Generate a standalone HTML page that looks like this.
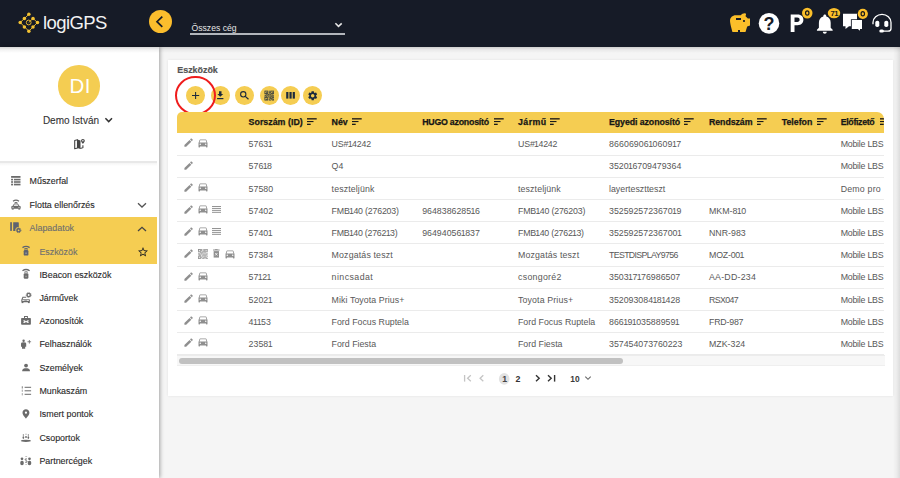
<!DOCTYPE html><html><head><meta charset="utf-8"><style>
html,body{margin:0;padding:0;width:900px;height:478px;overflow:hidden;background:#f5f5f5;font-family:"Liberation Sans",sans-serif;}
body{position:relative}
div,svg{box-sizing:border-box;}
</style></head><body>
<div style="position:absolute;left:886px;top:46px;width:14px;height:432px;background:linear-gradient(90deg,rgba(0,0,0,0) 0%,rgba(0,0,0,0) 50%,rgba(0,0,0,0.035) 75%,rgba(0,0,0,0.1) 100%)"></div>
<div style="position:absolute;left:0;top:0;width:900px;height:46.7px;background:#161b27;"></div>
<svg style="position:absolute;left:0px;top:0px;width:50px;height:46px;overflow:visible" viewBox="0 0 50 46"><path d="M28.85 14.3 L20.2 22.5 L28.85 31.2 L37.5 22.5 L33 18.4 L28.7 22.5" stroke="#f3c232" stroke-width="0.9" fill="none"/><circle cx="28.7" cy="22.5" r="2.4" stroke="#f3c232" stroke-width="0.9" fill="none"/><circle cx="28.85" cy="14.3" r="1.75" fill="#f3c232"/><circle cx="24.4" cy="18.4" r="1.75" fill="#f3c232"/><circle cx="33" cy="18.4" r="1.75" fill="#f3c232"/><circle cx="20.2" cy="22.5" r="1.75" fill="#f3c232"/><circle cx="37.5" cy="22.5" r="1.75" fill="#f3c232"/><circle cx="24.4" cy="27" r="1.75" fill="#f3c232"/><circle cx="33" cy="27" r="1.75" fill="#f3c232"/><circle cx="28.85" cy="31.2" r="1.75" fill="#f3c232"/></svg>
<div style="position:absolute;left:43px;top:14.14px;font-size:18.5px;line-height:18.5px;color:#f2f2f2;font-weight:400;letter-spacing:-0.6px;white-space:nowrap;">logiGPS</div>
<div style="position:absolute;left:148.5px;top:10.2px;width:23px;height:23px;border-radius:50%;background:#fbbd2d"></div>
<svg style="position:absolute;left:0px;top:0px;width:180px;height:46px;overflow:visible" viewBox="0 0 180 46"><path d="M162.3 16.7 L157 21.7 L162.3 26.8" stroke="#161b27" stroke-width="1.7" fill="none"/></svg>
<div style="position:absolute;left:191.5px;top:24.38px;font-size:8.65px;line-height:8.65px;color:#e6e6e6;font-weight:400;letter-spacing:0px;white-space:nowrap;">Összes cég</div>
<div style="position:absolute;left:190px;top:33.1px;width:155px;height:1.7px;background:#b2b6bc"></div>
<svg style="position:absolute;left:0px;top:0px;width:350px;height:46px;overflow:visible" viewBox="0 0 350 46"><path d="M335.4 23.3 L338.5 26.3 L341.7 23.3" stroke="#e6e6e6" stroke-width="1.6" fill="none"/></svg>
<svg style="position:absolute;left:728.3px;top:11.3px;width:24px;height:24px" viewBox="0 0 24 24" ><path fill="#fbbf2a" d="M19.83 7.5l-2.27-2.27c.07-.42.18-.81.32-1.15.08-.18.12-.37.12-.58 0-.69-.56-1.25-1.25-1.25-1.64 0-3.09.79-4 2h-5C4.46 4.25 2 6.71 2 9.75S4.5 21 4.5 21H10v-2h2v2h5.5l1.68-5.59 2.82-.94V7.5h-2.17zM13 9H8V7h5v2zm3 2c-.55 0-1-.45-1-1s.45-1 1-1 1 .45 1 1-.45 1-1 1z"/></svg>
<svg style="position:absolute;left:0px;top:0px;width:900px;height:46px;overflow:visible" viewBox="0 0 900 46"><circle cx="769" cy="23.4" r="10.3" fill="#fff"/></svg>
<div style="position:absolute;left:763.6px;top:15.26px;font-size:18px;line-height:18px;color:#161b27;font-weight:700;letter-spacing:0px;white-space:nowrap;">?</div>
<svg style="position:absolute;left:0px;top:0px;width:900px;height:46px;overflow:visible" viewBox="0 0 900 46"><path d="M790.7 31.9 V14.4 H797.5 C801.5 14.4 803.4 16.8 803.4 19.8 C803.4 22.8 801.5 25.2 797.5 25.2 H794.5 V31.9 Z M794.5 17.6 V22.0 H797.2 C798.8 22.0 799.6 21.1 799.6 19.8 C799.6 18.5 798.8 17.6 797.2 17.6 Z" fill="#fff" fill-rule="evenodd"/></svg>
<svg style="position:absolute;left:812.8px;top:11.6px;width:23.6px;height:23.6px" viewBox="0 0 24 24" ><path fill="#fff" d="M12 22c1.1 0 2-.9 2-2h-4c0 1.1.89 2 2 2zm6-6v-5c0-3.07-1.64-5.64-4.5-6.32V4c0-.83-.67-1.5-1.5-1.5s-1.5.67-1.5 1.5v.68C7.630 5.36 6 7.92 6 11v5l-2 2v1h16v-1l-2-2z"/></svg>
<svg style="position:absolute;left:0px;top:0px;width:900px;height:46px;overflow:visible" viewBox="0 0 900 46"><path d="M843 13.7 H857 V26.3 H849 L845.5 28.9 V26.3 H843 Z" fill="#fff"/>
<path d="M850.9 19.2 H862.8 V29.8 H860.6 V31.5 L858.2 29.8 H850.9 Z" fill="#161b27"/>
<path d="M851.8 20.1 H862 V29 H860 V30.8 L857.8 29 H851.8 Z" fill="#fff"/></svg>
<svg style="position:absolute;left:0px;top:0px;width:900px;height:46px;overflow:visible" viewBox="0 0 900 46"><path d="M873 24.3 V22.5 A9 8.2 0 0 1 891 22.5 V28.5 C891 30.5 890 31.2 888 31.2 H881.5" stroke="#fff" stroke-width="1.3" fill="none"/>
<rect x="875.3" y="20.7" width="4" height="6.4" rx="1.8" fill="#fff"/>
<rect x="884.3" y="20.7" width="4" height="6.4" rx="1.8" fill="#fff"/>
<rect x="879.3" y="29.6" width="4.6" height="3" rx="1.5" fill="#fff"/></svg>
<svg style="position:absolute;left:0px;top:0px;width:900px;height:46px;overflow:visible" viewBox="0 0 900 46"><ellipse cx="807.25" cy="13.1" rx="5.25" ry="5.35" fill="#fbbf2a"/><ellipse cx="807.25" cy="13.0" rx="1.7" ry="2.15" stroke="#1a1a1a" stroke-width="1.2" fill="none"/>
<ellipse cx="834" cy="13.1" rx="6.25" ry="5.15" fill="#fbbf2a"/>
<ellipse cx="862.8" cy="13.8" rx="5.1" ry="5.1" fill="#fbbf2a"/><ellipse cx="862.8" cy="13.7" rx="1.7" ry="2.15" stroke="#1a1a1a" stroke-width="1.2" fill="none"/></svg>
<div style="position:absolute;left:830.4px;top:9.87px;font-size:7.6px;line-height:7.6px;color:#1a1a1a;font-weight:700;letter-spacing:-0.3px;white-space:nowrap;">71</div>
<div style="position:absolute;left:0;top:47px;width:158.5px;height:431px;background:#fff;box-shadow:1px 0 4px rgba(0,0,0,0.35)"></div>
<div style="position:absolute;left:0;top:161px;width:157px;height:2.3px;background:#e8e8e8"></div>
<div style="position:absolute;left:0;top:163.3px;width:157px;height:2.5px;background:linear-gradient(#f4f4f4,#fff)"></div>
<div style="position:absolute;left:58.4px;top:65.3px;width:41.6px;height:41.6px;border-radius:50%;background:#f4cd52"></div>
<div style="position:absolute;left:69.6px;top:76.05px;font-size:20.5px;line-height:20.5px;color:#ffffff;font-weight:400;letter-spacing:0.3px;white-space:nowrap;">DI</div>
<div style="position:absolute;left:42.9px;top:115.83px;font-size:10.0px;line-height:10.0px;color:#333;font-weight:400;letter-spacing:0px;white-space:nowrap;-webkit-text-stroke:0.1px #333">Demo István</div>
<svg style="position:absolute;left:0px;top:0px;width:160px;height:160px;overflow:visible" viewBox="0 0 160 160"><path d="M105.4 118.3 L108.7 121.6 L112 118.3" stroke="#333" stroke-width="1.5" fill="none"/></svg>
<svg style="position:absolute;left:0px;top:0px;width:160px;height:160px;overflow:visible" viewBox="0 0 160 160"><path d="M74.7 140.6 L77.5 139.7 V147.9 L74.7 148.8 Z" stroke="#444" stroke-width="1.1" fill="none" stroke-linejoin="round"/><path d="M77.2 139.5 L80.5 140.6 V148.9 L77.2 147.9 Z" fill="#444"/><path d="M80.3 148.6 L82.9 147.7 V145.3" stroke="#444" stroke-width="1.1" fill="none"/><path d="M82.9 143.9 C82.9 143.9 81 142.2 81 140.8 A1.9 1.9 0 0 1 84.8 140.8 C84.8 142.2 82.9 143.9 82.9 143.9 Z" fill="#444"/><circle cx="82.9" cy="140.8" r="0.75" fill="#fff"/></svg>
<div style="position:absolute;left:0;top:216.9px;width:157.3px;height:46.8px;background:#f5cd52"></div>
<div style="position:absolute;left:29.6px;top:176.97px;font-size:8.9px;line-height:8.9px;color:#2a2a2a;font-weight:400;letter-spacing:0px;white-space:nowrap;-webkit-text-stroke:0.12px #2a2a2a">Műszerfal</div>
<div style="position:absolute;left:29.6px;top:201.07px;font-size:8.9px;line-height:8.9px;color:#2a2a2a;font-weight:400;letter-spacing:0px;white-space:nowrap;-webkit-text-stroke:0.12px #2a2a2a">Flotta ellenőrzés</div>
<div style="position:absolute;left:29.6px;top:224.47px;font-size:8.9px;line-height:8.9px;color:#6f6f6f;font-weight:400;letter-spacing:0px;white-space:nowrap;-webkit-text-stroke:0.12px #6f6f6f">Alapadatok</div>
<div style="position:absolute;left:39.4px;top:247.57px;font-size:8.9px;line-height:8.9px;color:#6f6f6f;font-weight:400;letter-spacing:0px;white-space:nowrap;-webkit-text-stroke:0.12px #6f6f6f">Eszközök</div>
<div style="position:absolute;left:39.4px;top:270.57px;font-size:8.9px;line-height:8.9px;color:#2a2a2a;font-weight:400;letter-spacing:0px;white-space:nowrap;-webkit-text-stroke:0.12px #2a2a2a">IBeacon eszközök</div>
<div style="position:absolute;left:39.4px;top:293.77px;font-size:8.9px;line-height:8.9px;color:#2a2a2a;font-weight:400;letter-spacing:0px;white-space:nowrap;-webkit-text-stroke:0.12px #2a2a2a">Járművek</div>
<div style="position:absolute;left:39.4px;top:317.07px;font-size:8.9px;line-height:8.9px;color:#2a2a2a;font-weight:400;letter-spacing:0px;white-space:nowrap;-webkit-text-stroke:0.12px #2a2a2a">Azonosítók</div>
<div style="position:absolute;left:39.4px;top:340.47px;font-size:8.9px;line-height:8.9px;color:#2a2a2a;font-weight:400;letter-spacing:0px;white-space:nowrap;-webkit-text-stroke:0.12px #2a2a2a">Felhasználók</div>
<div style="position:absolute;left:39.4px;top:363.57px;font-size:8.9px;line-height:8.9px;color:#2a2a2a;font-weight:400;letter-spacing:0px;white-space:nowrap;-webkit-text-stroke:0.12px #2a2a2a">Személyek</div>
<div style="position:absolute;left:39.4px;top:386.97px;font-size:8.9px;line-height:8.9px;color:#2a2a2a;font-weight:400;letter-spacing:0px;white-space:nowrap;-webkit-text-stroke:0.12px #2a2a2a">Munkaszám</div>
<div style="position:absolute;left:39.4px;top:409.87px;font-size:8.9px;line-height:8.9px;color:#2a2a2a;font-weight:400;letter-spacing:0px;white-space:nowrap;-webkit-text-stroke:0.12px #2a2a2a">Ismert pontok</div>
<div style="position:absolute;left:39.4px;top:433.57px;font-size:8.9px;line-height:8.9px;color:#2a2a2a;font-weight:400;letter-spacing:0px;white-space:nowrap;-webkit-text-stroke:0.12px #2a2a2a">Csoportok</div>
<div style="position:absolute;left:39.4px;top:456.57px;font-size:8.9px;line-height:8.9px;color:#2a2a2a;font-weight:400;letter-spacing:0px;white-space:nowrap;-webkit-text-stroke:0.12px #2a2a2a">Partnercégek</div>
<svg style="position:absolute;left:0px;top:0px;width:160px;height:478px;overflow:visible" viewBox="0 0 160 478"><g fill="#6b6b6b"><rect x="11.1" y="176" width="9.4" height="1.8"/><rect x="11.1" y="178.8" width="2" height="1.6"/><rect x="14" y="178.8" width="6.5" height="1.6"/><rect x="11.1" y="181.2" width="2" height="1.6"/><rect x="14" y="181.2" width="6.5" height="1.6"/><rect x="11.1" y="183.7" width="2" height="1.7"/><rect x="14" y="183.7" width="6.5" height="1.7"/></g><g stroke="#6b6b6b" fill="none"><path d="M13 201.3 Q16 199.1 19 201.3" stroke-width="1.2"/><path d="M14.5 202.8 Q16 201.9 17.5 202.8" stroke-width="0.9"/><path d="M14.4 203.9 H17.6 L19.2 206.3 H12.8 Z" stroke-width="1"/></g><g fill="#6b6b6b"><rect x="11.3" y="205.9" width="9.4" height="2.9" rx="0.9"/><rect x="11.8" y="208.4" width="1.9" height="1.2"/><rect x="18.3" y="208.4" width="1.9" height="1.2"/></g><g fill="#fff" opacity="0.75"><circle cx="13" cy="207.3" r="0.65"/><circle cx="19" cy="207.3" r="0.65"/></g><g fill="#5e6370"><rect x="10.2" y="222.2" width="1.7" height="8.7"/><path d="M13.2 222.2 H18.3 L18.8 222.7 V226.9 A3.7 3.7 0 0 0 15.3 230.9 H13.2 Z"/></g><circle cx="18.6" cy="230.3" r="1.55" stroke="#5e6370" stroke-width="1.3" fill="none"/><circle cx="18.6" cy="230.3" r="2.35" stroke="#5e6370" stroke-width="0.8" fill="none" stroke-dasharray="1.1 0.75"/><g stroke="#5e6370" fill="none"><path d="M22.5 247.60000000000002 Q26.05 245.10000000000002 29.6 247.60000000000002" stroke-width="1.35"/><path d="M24.3 249.20000000000002 Q26.05 248.0 27.8 249.20000000000002" stroke-width="1.1"/></g><rect x="23.7" y="250.10000000000002" width="4.7" height="5.5" rx="1.2" fill="#5e6370"/><rect x="25.2" y="252.5" width="1.7" height="1.4" fill="#fff" opacity="0.3"/><g stroke="#6b6b6b" fill="none"><path d="M22.5 270.8 Q26.05 268.3 29.6 270.8" stroke-width="1.35"/><path d="M24.3 272.4 Q26.05 271.2 27.8 272.4" stroke-width="1.1"/></g><rect x="23.7" y="273.3" width="4.7" height="5.5" rx="1.2" fill="#6b6b6b"/><rect x="25.2" y="275.7" width="1.7" height="1.4" fill="#fff" opacity="0.3"/><circle cx="28.7" cy="295" r="1.65" stroke="#6b6b6b" stroke-width="1.4" fill="none"/><circle cx="28.7" cy="295" r="2.5" stroke="#6b6b6b" stroke-width="0.7" fill="none" stroke-dasharray="1 0.65"/><path d="M21.9 299.6 L22.9 297.3 H26.2" stroke="#6b6b6b" stroke-width="1.1" fill="none"/><g fill="#6b6b6b"><rect x="21.3" y="299.3" width="8.6" height="3.0" rx="0.7"/><rect x="21.6" y="302" width="1.8" height="1.1"/><rect x="27.9" y="302" width="1.8" height="1.1"/></g><rect x="22.3" y="299.9" width="6.6" height="1.1" fill="#fff" opacity="0.8"/><rect x="24.3" y="300.5" width="2.6" height="1.0" fill="#6b6b6b"/><rect x="24.5" y="316.5" width="2.9" height="2.0" stroke="#6b6b6b" stroke-width="1" fill="none"/><rect x="21.1" y="318" width="9.8" height="6.7" rx="0.8" fill="#6b6b6b"/><path d="M23.2 320.2 H24.6 L25.6 321.1 H26.5 L27.5 320.2 H28.9 L28.2 321.6 L28.9 323 H27.5 L26.5 322.2 H25.6 L24.6 323 H23.2 L23.9 321.6 Z" fill="#fff" opacity="0.9"/><g fill="#6b6b6b"><circle cx="23.6" cy="340.8" r="1.2"/><path d="M21 343.6 Q21 342.3 23.6 342.3 Q26.2 342.3 26.2 343.6 V346.8 H25.2 V348.8 H22 V346.8 H21 Z"/><rect x="27.5" y="341.4" width="3.6" height="0.8"/><rect x="28.9" y="340" width="0.8" height="3.6"/></g><g fill="#6b6b6b"><circle cx="26.05" cy="365.6" r="1.9"/><path d="M22.2 371.3 V370.4 C22.2 368.8 24.2 368.2 26.05 368.2 C27.9 368.2 29.9 368.8 29.9 370.4 V371.3 Z"/></g><g fill="#6b6b6b"><rect x="24.6" y="386.8" width="6.5" height="1"/><rect x="24.6" y="390.3" width="6.5" height="1"/><rect x="24.6" y="393.8" width="6.5" height="1"/><rect x="21.8" y="386.3" width="0.9" height="2.2"/><rect x="21.8" y="389.6" width="0.9" height="2.2" opacity="0.7"/><rect x="21.8" y="393.1" width="0.9" height="2.3" opacity="0.7"/></g><path d="M25.95 409.3 C24 409.3 22.5 410.8 22.5 412.7 C22.5 415.2 25.95 418.5 25.95 418.5 C25.95 418.5 29.4 415.2 29.4 412.7 C29.4 410.8 27.9 409.3 25.95 409.3 Z M25.95 411.6 A1.1 1.1 0 1 0 25.95 413.8 A1.1 1.1 0 1 0 25.95 411.6 Z" fill="#6b6b6b" fill-rule="evenodd"/><g fill="#6b6b6b"><ellipse cx="25.9" cy="440.85" rx="5.1" ry="1.15"/><circle cx="23.35" cy="435" r="0.65"/><ellipse cx="23.35" cy="437.6" rx="0.8" ry="1.3"/><circle cx="28.35" cy="435" r="0.65"/><ellipse cx="28.35" cy="437.6" rx="0.8" ry="1.3"/><circle cx="26" cy="434.2" r="0.8" opacity="0.45"/><ellipse cx="26" cy="437" rx="1.1" ry="1" opacity="0.85"/></g><g fill="#6b6b6b"><circle cx="22" cy="458.8" r="1.35"/><ellipse cx="22" cy="463" rx="1.8" ry="2.3"/><circle cx="29.5" cy="458.8" r="1.35"/><ellipse cx="29.5" cy="463" rx="1.8" ry="2.3"/></g><path d="M27 459.2 Q26.1 458.4 25.2 459.1 Q24.6 460 26.1 460.5 Q27.6 461 27 462 Q26.1 462.8 25.1 462.1" stroke="#6b6b6b" stroke-width="0.9" fill="none"/><g fill="#6b6b6b" opacity="0.6"><rect x="25.3" y="456.1" width="1.8" height="0.7"/><rect x="25.3" y="464.2" width="1.8" height="0.6"/></g></svg>
<svg style="position:absolute;left:0px;top:0px;width:160px;height:478px;overflow:visible" viewBox="0 0 160 478"><path d="M138 203.3 L142 207 L146 203.3" stroke="#555" stroke-width="1.3" fill="none"/>
<path d="M138 231 L142 227.3 L146 231" stroke="#444" stroke-width="1.3" fill="none"/></svg>
<svg style="position:absolute;left:137.2px;top:246.2px;width:12px;height:12px" viewBox="0 0 24 24" ><path fill="#222" d="M22 9.24l-7.19-.62L12 2 9.19 8.63 2 9.24l5.46 4.73L5.82 21 12 17.27 18.18 21l-1.63-7.03L22 9.24zM12 15.4l-3.76 2.27 1-4.28-3.32-2.88 4.38-.38L12 6.1l1.710 4.04 4.38.38-3.32 2.88 1 4.28L12 15.4z"/></svg>
<div style="position:absolute;left:167.7px;top:59.9px;width:725.5px;height:336.3px;background:#fff;box-shadow:0 0 2.5px rgba(0,0,0,0.08)"></div>
<div style="position:absolute;left:177.3px;top:65.77px;font-size:8.9px;line-height:8.9px;color:#555;font-weight:700;letter-spacing:0px;white-space:nowrap;-webkit-text-stroke:0.2px #555">Eszközök</div>
<div style="position:absolute;left:186.0px;top:86.15px;width:19px;height:19.2px;border-radius:50%;background:#f5cd52"></div>
<div style="position:absolute;left:210.6px;top:86.15px;width:19px;height:19.2px;border-radius:50%;background:#f5cd52"></div>
<div style="position:absolute;left:235.1px;top:86.15px;width:19px;height:19.2px;border-radius:50%;background:#f5cd52"></div>
<div style="position:absolute;left:259.8px;top:86.15px;width:19px;height:19.2px;border-radius:50%;background:#f5cd52"></div>
<div style="position:absolute;left:281.0px;top:86.15px;width:19px;height:19.2px;border-radius:50%;background:#f5cd52"></div>
<div style="position:absolute;left:303.0px;top:86.15px;width:19px;height:19.2px;border-radius:50%;background:#f5cd52"></div>
<svg style="position:absolute;left:0px;top:0px;width:900px;height:478px;overflow:visible" viewBox="0 0 900 478"><path d="M195.6 91.9 V99.1 M192 95.5 H199.2" stroke="#1c2a3c" stroke-width="1.05" fill="none"/><path d="M219.0 91.2 H221.5 V93.9 H223.2 L220.25 96.8 L217.3 93.9 H219.0 Z" fill="#1c2a3c"/><rect x="217.1" y="98.0" width="6.3" height="1.2" fill="#1c2a3c"/><circle cx="243.25" cy="94.3" r="2.65" stroke="#1c2a3c" stroke-width="1.1" fill="none"/><path d="M245.3 96.35 L248.5 99.2" stroke="#1c2a3c" stroke-width="1.25"/><g fill="#1c2a3c"><rect x="264.50" y="90.70" width="0.77" height="0.86"/><rect x="265.22" y="90.70" width="0.77" height="0.86"/><rect x="265.95" y="90.70" width="0.77" height="0.86"/><rect x="266.67" y="90.70" width="0.77" height="0.86"/><rect x="267.39" y="90.70" width="0.77" height="0.86"/><rect x="268.84" y="90.70" width="0.77" height="0.86"/><rect x="270.28" y="90.70" width="0.77" height="0.86"/><rect x="271.01" y="90.70" width="0.77" height="0.86"/><rect x="271.73" y="90.70" width="0.77" height="0.86"/><rect x="272.45" y="90.70" width="0.77" height="0.86"/><rect x="273.18" y="90.70" width="0.77" height="0.86"/><rect x="264.50" y="91.51" width="0.77" height="0.86"/><rect x="267.39" y="91.51" width="0.77" height="0.86"/><rect x="268.84" y="91.51" width="0.77" height="0.86"/><rect x="270.28" y="91.51" width="0.77" height="0.86"/><rect x="273.18" y="91.51" width="0.77" height="0.86"/><rect x="264.50" y="92.32" width="0.77" height="0.86"/><rect x="265.95" y="92.32" width="0.77" height="0.86"/><rect x="266.67" y="92.32" width="0.77" height="0.86"/><rect x="267.39" y="92.32" width="0.77" height="0.86"/><rect x="268.84" y="92.32" width="0.77" height="0.86"/><rect x="269.56" y="92.32" width="0.77" height="0.86"/><rect x="270.28" y="92.32" width="0.77" height="0.86"/><rect x="271.73" y="92.32" width="0.77" height="0.86"/><rect x="272.45" y="92.32" width="0.77" height="0.86"/><rect x="273.18" y="92.32" width="0.77" height="0.86"/><rect x="264.50" y="93.12" width="0.77" height="0.86"/><rect x="265.22" y="93.12" width="0.77" height="0.86"/><rect x="265.95" y="93.12" width="0.77" height="0.86"/><rect x="266.67" y="93.12" width="0.77" height="0.86"/><rect x="267.39" y="93.12" width="0.77" height="0.86"/><rect x="269.56" y="93.12" width="0.77" height="0.86"/><rect x="271.01" y="93.12" width="0.77" height="0.86"/><rect x="271.73" y="93.12" width="0.77" height="0.86"/><rect x="272.45" y="93.12" width="0.77" height="0.86"/><rect x="273.18" y="93.12" width="0.77" height="0.86"/><rect x="265.95" y="93.93" width="0.77" height="0.86"/><rect x="267.39" y="93.93" width="0.77" height="0.86"/><rect x="268.12" y="93.93" width="0.77" height="0.86"/><rect x="268.84" y="93.93" width="0.77" height="0.86"/><rect x="270.28" y="93.93" width="0.77" height="0.86"/><rect x="271.73" y="93.93" width="0.77" height="0.86"/><rect x="264.50" y="94.74" width="0.77" height="0.86"/><rect x="265.22" y="94.74" width="0.77" height="0.86"/><rect x="266.67" y="94.74" width="0.77" height="0.86"/><rect x="268.12" y="94.74" width="0.77" height="0.86"/><rect x="269.56" y="94.74" width="0.77" height="0.86"/><rect x="270.28" y="94.74" width="0.77" height="0.86"/><rect x="271.01" y="94.74" width="0.77" height="0.86"/><rect x="272.45" y="94.74" width="0.77" height="0.86"/><rect x="273.18" y="94.74" width="0.77" height="0.86"/><rect x="265.22" y="95.55" width="0.77" height="0.86"/><rect x="265.95" y="95.55" width="0.77" height="0.86"/><rect x="266.67" y="95.55" width="0.77" height="0.86"/><rect x="267.39" y="95.55" width="0.77" height="0.86"/><rect x="268.84" y="95.55" width="0.77" height="0.86"/><rect x="271.73" y="95.55" width="0.77" height="0.86"/><rect x="272.45" y="95.55" width="0.77" height="0.86"/><rect x="264.50" y="96.36" width="0.77" height="0.86"/><rect x="265.95" y="96.36" width="0.77" height="0.86"/><rect x="268.12" y="96.36" width="0.77" height="0.86"/><rect x="269.56" y="96.36" width="0.77" height="0.86"/><rect x="270.28" y="96.36" width="0.77" height="0.86"/><rect x="271.01" y="96.36" width="0.77" height="0.86"/><rect x="271.73" y="96.36" width="0.77" height="0.86"/><rect x="273.18" y="96.36" width="0.77" height="0.86"/><rect x="264.50" y="97.17" width="0.77" height="0.86"/><rect x="265.22" y="97.17" width="0.77" height="0.86"/><rect x="265.95" y="97.17" width="0.77" height="0.86"/><rect x="266.67" y="97.17" width="0.77" height="0.86"/><rect x="267.39" y="97.17" width="0.77" height="0.86"/><rect x="268.84" y="97.17" width="0.77" height="0.86"/><rect x="270.28" y="97.17" width="0.77" height="0.86"/><rect x="271.73" y="97.17" width="0.77" height="0.86"/><rect x="272.45" y="97.17" width="0.77" height="0.86"/><rect x="273.18" y="97.17" width="0.77" height="0.86"/><rect x="264.50" y="97.98" width="0.77" height="0.86"/><rect x="267.39" y="97.98" width="0.77" height="0.86"/><rect x="269.56" y="97.98" width="0.77" height="0.86"/><rect x="270.28" y="97.98" width="0.77" height="0.86"/><rect x="271.01" y="97.98" width="0.77" height="0.86"/><rect x="272.45" y="97.98" width="0.77" height="0.86"/><rect x="264.50" y="98.78" width="0.77" height="0.86"/><rect x="265.95" y="98.78" width="0.77" height="0.86"/><rect x="266.67" y="98.78" width="0.77" height="0.86"/><rect x="267.39" y="98.78" width="0.77" height="0.86"/><rect x="268.84" y="98.78" width="0.77" height="0.86"/><rect x="271.01" y="98.78" width="0.77" height="0.86"/><rect x="272.45" y="98.78" width="0.77" height="0.86"/><rect x="273.18" y="98.78" width="0.77" height="0.86"/><rect x="264.50" y="99.59" width="0.77" height="0.86"/><rect x="265.22" y="99.59" width="0.77" height="0.86"/><rect x="265.95" y="99.59" width="0.77" height="0.86"/><rect x="266.67" y="99.59" width="0.77" height="0.86"/><rect x="267.39" y="99.59" width="0.77" height="0.86"/><rect x="268.84" y="99.59" width="0.77" height="0.86"/><rect x="269.56" y="99.59" width="0.77" height="0.86"/><rect x="270.28" y="99.59" width="0.77" height="0.86"/><rect x="271.73" y="99.59" width="0.77" height="0.86"/><rect x="272.45" y="99.59" width="0.77" height="0.86"/><rect x="273.18" y="99.59" width="0.77" height="0.86"/></g><g fill="#1c2a3c"><rect x="286.2" y="92" width="2.2" height="6.6"/><rect x="289.45" y="92" width="2.2" height="6.6"/><rect x="292.7" y="92" width="2.2" height="6.6"/></g></svg>
<svg style="position:absolute;left:306.5px;top:89.7px;width:11.4px;height:11.4px" viewBox="0 0 24 24" ><path fill="#1c2a3c" d="M19.14 12.94c.04-.3.06-.61.06-.94 0-.32-.02-.64-.07-.94l2.03-1.58c.18-.14.23-.41.12-.61l-1.92-3.32c-.12-.22-.37-.29-.59-.22l-2.39.96c-.5-.38-1.03-.7-1.62-.94l-.36-2.54c-.04-.24-.24-.41-.48-.41h-3.84c-.24 0-.43.17-.47.41l-.36 2.54c-.59.24-1.130.57-1.62.94l-2.39-.96c-.22-.08-.47 0-.59.22L2.74 8.87c-.12.21-.08.47.12.61l2.03 1.58c-.05.3-.09.63-.09.94s.02.64.07.94l-2.03 1.58c-.18.14-.23.41-.12.61l1.92 3.32c.12.22.37.29.59.22l2.39-.96c.5.38 1.03.7 1.62.94l.36 2.54c.05.24.24.41.48.41h3.84c.24 0 .44-.17.47-.41l.36-2.54c.59-.24 1.13-.56 1.62-.94l2.39.96c.22.08.47 0 .59-.22l1.92-3.32c.12-.22.07-.47-.12-.61l-2.01-1.58zM12 15.6c-1.98 0-3.6-1.62-3.6-3.6s1.62-3.6 3.6-3.6 3.6 1.62 3.6 3.6-1.62 3.6-3.6 3.6z"/></svg>
<div style="position:absolute;left:175px;top:76.1px;width:40.6px;height:39.2px;border-radius:50%;border:2.1px solid #ef1c1c"></div>
<div style="position:absolute;left:0;top:46.7px;width:900px;height:6px;background:linear-gradient(rgba(0,0,0,0.16),rgba(0,0,0,0.05) 45%,rgba(0,0,0,0))"></div>
<div style="position:absolute;left:177px;top:111.8px;width:707px;height:21.3px;overflow:hidden;border-radius:5px 7px 0 0;background:#f5cd52">
<div style="position:absolute;left:71.6px;top:6.25px;font-size:8.8px;line-height:8.8px;color:#161616;font-weight:700;letter-spacing:0.03px;white-space:nowrap;-webkit-text-stroke:0.25px #161616">Sorszám (ID)</div>
<svg style="position:absolute;left:130.2px;top:6.200000000000003px;width:10px;height:8px;overflow:visible" viewBox="0 0 10 8"><rect x="0" y="0" width="9.7" height="1.6" fill="#3f3520"/><rect x="0" y="3.0" width="6.5" height="1.1" fill="#1a1a1a"/><rect x="0" y="5.7" width="3.7" height="1.3" fill="#1a1a1a"/></svg>
<div style="position:absolute;left:154.60000000000002px;top:6.25px;font-size:8.8px;line-height:8.8px;color:#161616;font-weight:700;letter-spacing:0px;white-space:nowrap;-webkit-text-stroke:0.25px #161616">Név</div>
<svg style="position:absolute;left:174.89999999999998px;top:6.200000000000003px;width:10px;height:8px;overflow:visible" viewBox="0 0 10 8"><rect x="0" y="0" width="9.7" height="1.6" fill="#3f3520"/><rect x="0" y="3.0" width="6.5" height="1.1" fill="#1a1a1a"/><rect x="0" y="5.7" width="3.7" height="1.3" fill="#1a1a1a"/></svg>
<div style="position:absolute;left:245.2px;top:6.25px;font-size:8.8px;line-height:8.8px;color:#161616;font-weight:700;letter-spacing:-0.23px;white-space:nowrap;-webkit-text-stroke:0.25px #161616">HUGO azonosító</div>
<svg style="position:absolute;left:316.9px;top:6.200000000000003px;width:10px;height:8px;overflow:visible" viewBox="0 0 10 8"><rect x="0" y="0" width="9.7" height="1.6" fill="#3f3520"/><rect x="0" y="3.0" width="6.5" height="1.1" fill="#1a1a1a"/><rect x="0" y="5.7" width="3.7" height="1.3" fill="#1a1a1a"/></svg>
<div style="position:absolute;left:341px;top:6.25px;font-size:8.8px;line-height:8.8px;color:#161616;font-weight:700;letter-spacing:0.44px;white-space:nowrap;-webkit-text-stroke:0.25px #161616">Jármű</div>
<svg style="position:absolute;left:373px;top:6.200000000000003px;width:10px;height:8px;overflow:visible" viewBox="0 0 10 8"><rect x="0" y="0" width="9.7" height="1.6" fill="#3f3520"/><rect x="0" y="3.0" width="6.5" height="1.1" fill="#1a1a1a"/><rect x="0" y="5.7" width="3.7" height="1.3" fill="#1a1a1a"/></svg>
<div style="position:absolute;left:432px;top:6.25px;font-size:8.8px;line-height:8.8px;color:#161616;font-weight:700;letter-spacing:-0.08px;white-space:nowrap;-webkit-text-stroke:0.25px #161616">Egyedi azonosító</div>
<svg style="position:absolute;left:507.29999999999995px;top:6.200000000000003px;width:10px;height:8px;overflow:visible" viewBox="0 0 10 8"><rect x="0" y="0" width="9.7" height="1.6" fill="#3f3520"/><rect x="0" y="3.0" width="6.5" height="1.1" fill="#1a1a1a"/><rect x="0" y="5.7" width="3.7" height="1.3" fill="#1a1a1a"/></svg>
<div style="position:absolute;left:532px;top:6.25px;font-size:8.8px;line-height:8.8px;color:#161616;font-weight:700;letter-spacing:-0.07px;white-space:nowrap;-webkit-text-stroke:0.25px #161616">Rendszám</div>
<svg style="position:absolute;left:580.3px;top:6.200000000000003px;width:10px;height:8px;overflow:visible" viewBox="0 0 10 8"><rect x="0" y="0" width="9.7" height="1.6" fill="#3f3520"/><rect x="0" y="3.0" width="6.5" height="1.1" fill="#1a1a1a"/><rect x="0" y="5.7" width="3.7" height="1.3" fill="#1a1a1a"/></svg>
<div style="position:absolute;left:604.7px;top:6.25px;font-size:8.8px;line-height:8.8px;color:#161616;font-weight:700;letter-spacing:0px;white-space:nowrap;-webkit-text-stroke:0.25px #161616">Telefon</div>
<svg style="position:absolute;left:639.7px;top:6.200000000000003px;width:10px;height:8px;overflow:visible" viewBox="0 0 10 8"><rect x="0" y="0" width="9.7" height="1.6" fill="#3f3520"/><rect x="0" y="3.0" width="6.5" height="1.1" fill="#1a1a1a"/><rect x="0" y="5.7" width="3.7" height="1.3" fill="#1a1a1a"/></svg>
<div style="position:absolute;left:663.7px;top:6.25px;font-size:8.8px;line-height:8.8px;color:#161616;font-weight:700;letter-spacing:-0.33px;white-space:nowrap;-webkit-text-stroke:0.25px #161616">Előfizető</div>
<svg style="position:absolute;left:702.8px;top:6.200000000000003px;width:10px;height:8px;overflow:visible" viewBox="0 0 10 8"><rect x="0" y="0" width="9.7" height="1.6" fill="#3f3520"/><rect x="0" y="3.0" width="6.5" height="1.1" fill="#1a1a1a"/><rect x="0" y="5.7" width="3.7" height="1.3" fill="#1a1a1a"/></svg>
</div>
<div style="position:absolute;left:177px;top:133.1px;width:707px;height:222px;overflow:hidden">
<div style="position:absolute;left:0;top:21.60px;width:707px;height:1px;background:#ebebeb"></div>
<svg style="position:absolute;left:6.4px;top:4.4px;width:11.2px;height:11.2px" viewBox="0 0 24 24" ><path fill="#8f8f8f" d="M3 17.25V21h3.75L17.81 9.94l-3.75-3.75L3 17.25zM20.71 7.04c.39-.39.39-1.02 0-1.41l-2.34-2.34c-.39-.39-1.02-.39-1.41 0l-1.83 1.83 3.75 3.75 1.83-1.83z"/></svg>
<svg style="position:absolute;left:19.7px;top:3.6px;width:12px;height:12px" viewBox="0 0 24 24" ><path fill="#8f8f8f" d="M18.92 6.01C18.72 5.42 18.16 5 17.5 5h-11c-.66 0-1.21.42-1.42 1.01L3 12v8c0 .55.45 1 1 1h1c.55 0 1-.45 1-1v-1h12v1c0 .55.45 1 1 1h1c.55 0 1-.45 1-1v-8l-2.08-5.99zM6.5 16c-.83 0-1.5-.67-1.5-1.5S5.670 13 6.5 13s1.5.67 1.5 1.5S7.33 16 6.5 16zm11 0c-.83 0-1.5-.67-1.5-1.5s.67-1.5 1.5-1.5 1.5.67 1.5 1.5-.67 1.5-1.5 1.5zM5 11l1.5-4.5h11L19 11H5z"/></svg>
<div style="position:absolute;left:71.6px;top:7.15px;font-size:8.8px;line-height:8.8px;color:#585858;font-weight:400;letter-spacing:0px;white-space:nowrap;">5763<span style="margin-left:-0.55px;letter-spacing:-0.55px">1</span></div>
<div style="position:absolute;left:154.60000000000002px;top:7.15px;font-size:8.8px;line-height:8.8px;color:#585858;font-weight:400;letter-spacing:-0.17px;white-space:nowrap;">US#<span style="margin-left:-0.55px;letter-spacing:-0.55px">1</span>4242</div>
<div style="position:absolute;left:341px;top:7.15px;font-size:8.8px;line-height:8.8px;color:#585858;font-weight:400;letter-spacing:-0.17px;white-space:nowrap;">US#<span style="margin-left:-0.55px;letter-spacing:-0.55px">1</span>4242</div>
<div style="position:absolute;left:432px;top:7.15px;font-size:8.8px;line-height:8.8px;color:#585858;font-weight:400;letter-spacing:0.08px;white-space:nowrap;">86606906<span style="margin-left:-0.55px;letter-spacing:-0.55px">1</span>0609<span style="margin-left:-0.55px;letter-spacing:-0.55px">1</span>7</div>
<div style="position:absolute;left:663.7px;top:7.15px;font-size:8.8px;line-height:8.8px;color:#585858;font-weight:400;letter-spacing:-0.23px;white-space:nowrap;">Mobile LBS</div>
<div style="position:absolute;left:0;top:43.79px;width:707px;height:1px;background:#ebebeb"></div>
<svg style="position:absolute;left:6.4px;top:26.590000000000003px;width:11.2px;height:11.2px" viewBox="0 0 24 24" ><path fill="#8f8f8f" d="M3 17.25V21h3.75L17.81 9.94l-3.75-3.75L3 17.25zM20.71 7.04c.39-.39.39-1.02 0-1.41l-2.34-2.34c-.39-.39-1.02-.39-1.41 0l-1.83 1.83 3.75 3.75 1.83-1.83z"/></svg>
<div style="position:absolute;left:71.6px;top:29.34px;font-size:8.8px;line-height:8.8px;color:#585858;font-weight:400;letter-spacing:0px;white-space:nowrap;">576<span style="margin-left:-0.55px;letter-spacing:-0.55px">1</span>8</div>
<div style="position:absolute;left:154.60000000000002px;top:29.34px;font-size:8.8px;line-height:8.8px;color:#585858;font-weight:400;letter-spacing:0px;white-space:nowrap;">Q4</div>
<div style="position:absolute;left:432px;top:29.34px;font-size:8.8px;line-height:8.8px;color:#585858;font-weight:400;letter-spacing:0px;white-space:nowrap;">3520<span style="margin-left:-0.55px;letter-spacing:-0.55px">1</span>6709479364</div>
<div style="position:absolute;left:663.7px;top:29.34px;font-size:8.8px;line-height:8.8px;color:#585858;font-weight:400;letter-spacing:-0.23px;white-space:nowrap;">Mobile LBS</div>
<div style="position:absolute;left:0;top:65.98px;width:707px;height:1px;background:#ebebeb"></div>
<svg style="position:absolute;left:6.4px;top:48.78px;width:11.2px;height:11.2px" viewBox="0 0 24 24" ><path fill="#8f8f8f" d="M3 17.25V21h3.75L17.81 9.94l-3.75-3.75L3 17.25zM20.71 7.04c.39-.39.39-1.02 0-1.41l-2.34-2.34c-.39-.39-1.02-.39-1.41 0l-1.83 1.83 3.75 3.75 1.83-1.83z"/></svg>
<svg style="position:absolute;left:19.7px;top:47.980000000000004px;width:12px;height:12px" viewBox="0 0 24 24" ><path fill="#8f8f8f" d="M18.92 6.01C18.72 5.42 18.16 5 17.5 5h-11c-.66 0-1.21.42-1.42 1.01L3 12v8c0 .55.45 1 1 1h1c.55 0 1-.45 1-1v-1h12v1c0 .55.45 1 1 1h1c.55 0 1-.45 1-1v-8l-2.08-5.99zM6.5 16c-.83 0-1.5-.67-1.5-1.5S5.670 13 6.5 13s1.5.67 1.5 1.5S7.33 16 6.5 16zm11 0c-.83 0-1.5-.67-1.5-1.5s.67-1.5 1.5-1.5 1.5.67 1.5 1.5-.67 1.5-1.5 1.5zM5 11l1.5-4.5h11L19 11H5z"/></svg>
<div style="position:absolute;left:71.6px;top:51.53px;font-size:8.8px;line-height:8.8px;color:#585858;font-weight:400;letter-spacing:0px;white-space:nowrap;">57580</div>
<div style="position:absolute;left:154.60000000000002px;top:51.53px;font-size:8.8px;line-height:8.8px;color:#585858;font-weight:400;letter-spacing:0.12px;white-space:nowrap;">teszteljünk</div>
<div style="position:absolute;left:341px;top:51.53px;font-size:8.8px;line-height:8.8px;color:#585858;font-weight:400;letter-spacing:0.12px;white-space:nowrap;">teszteljünk</div>
<div style="position:absolute;left:432px;top:51.53px;font-size:8.8px;line-height:8.8px;color:#585858;font-weight:400;letter-spacing:0px;white-space:nowrap;">layertesztteszt</div>
<div style="position:absolute;left:663.7px;top:51.53px;font-size:8.8px;line-height:8.8px;color:#585858;font-weight:400;letter-spacing:0.2px;white-space:nowrap;">Demo pro</div>
<div style="position:absolute;left:0;top:88.17px;width:707px;height:1px;background:#ebebeb"></div>
<svg style="position:absolute;left:6.4px;top:70.97000000000001px;width:11.2px;height:11.2px" viewBox="0 0 24 24" ><path fill="#8f8f8f" d="M3 17.25V21h3.75L17.81 9.94l-3.75-3.75L3 17.25zM20.71 7.04c.39-.39.39-1.02 0-1.41l-2.34-2.34c-.39-.39-1.02-.39-1.41 0l-1.83 1.83 3.75 3.75 1.83-1.83z"/></svg>
<svg style="position:absolute;left:19.7px;top:70.17px;width:12px;height:12px" viewBox="0 0 24 24" ><path fill="#8f8f8f" d="M18.92 6.01C18.72 5.42 18.16 5 17.5 5h-11c-.66 0-1.21.42-1.42 1.01L3 12v8c0 .55.45 1 1 1h1c.55 0 1-.45 1-1v-1h12v1c0 .55.45 1 1 1h1c.55 0 1-.45 1-1v-8l-2.08-5.99zM6.5 16c-.83 0-1.5-.67-1.5-1.5S5.670 13 6.5 13s1.5.67 1.5 1.5S7.33 16 6.5 16zm11 0c-.83 0-1.5-.67-1.5-1.5s.67-1.5 1.5-1.5 1.5.67 1.5 1.5-.67 1.5-1.5 1.5zM5 11l1.5-4.5h11L19 11H5z"/></svg>
<svg style="position:absolute;left:35.0px;top:73.07000000000001px;width:9px;height:7px;overflow:visible" viewBox="0 0 9 7"><g fill="#8f8f8f"><rect x="0" y="0" width="9" height="0.95"/><rect x="0" y="1.95" width="9" height="0.95"/><rect x="0" y="3.9" width="9" height="0.95"/><rect x="0" y="5.85" width="9" height="0.95"/></g></svg>
<div style="position:absolute;left:71.6px;top:73.72px;font-size:8.8px;line-height:8.8px;color:#585858;font-weight:400;letter-spacing:0px;white-space:nowrap;">57402</div>
<div style="position:absolute;left:154.60000000000002px;top:73.72px;font-size:8.8px;line-height:8.8px;color:#585858;font-weight:400;letter-spacing:-0.19px;white-space:nowrap;">FMB<span style="margin-left:-0.55px;letter-spacing:-0.55px">1</span>40 (276203)</div>
<div style="position:absolute;left:245.2px;top:73.72px;font-size:8.8px;line-height:8.8px;color:#585858;font-weight:400;letter-spacing:0px;white-space:nowrap;">9648386285<span style="margin-left:-0.55px;letter-spacing:-0.55px">1</span>6</div>
<div style="position:absolute;left:341px;top:73.72px;font-size:8.8px;line-height:8.8px;color:#585858;font-weight:400;letter-spacing:-0.19px;white-space:nowrap;">FMB<span style="margin-left:-0.55px;letter-spacing:-0.55px">1</span>40 (276203)</div>
<div style="position:absolute;left:432px;top:73.72px;font-size:8.8px;line-height:8.8px;color:#585858;font-weight:400;letter-spacing:0px;white-space:nowrap;">3525925723670<span style="margin-left:-0.55px;letter-spacing:-0.55px">1</span>9</div>
<div style="position:absolute;left:532px;top:73.72px;font-size:8.8px;line-height:8.8px;color:#585858;font-weight:400;letter-spacing:0px;white-space:nowrap;">MKM-8<span style="margin-left:-0.55px;letter-spacing:-0.55px">1</span>0</div>
<div style="position:absolute;left:663.7px;top:73.72px;font-size:8.8px;line-height:8.8px;color:#585858;font-weight:400;letter-spacing:-0.23px;white-space:nowrap;">Mobile LBS</div>
<div style="position:absolute;left:0;top:110.36px;width:707px;height:1px;background:#ebebeb"></div>
<svg style="position:absolute;left:6.4px;top:93.16000000000001px;width:11.2px;height:11.2px" viewBox="0 0 24 24" ><path fill="#8f8f8f" d="M3 17.25V21h3.75L17.81 9.94l-3.75-3.75L3 17.25zM20.71 7.04c.39-.39.39-1.02 0-1.41l-2.34-2.34c-.39-.39-1.02-.39-1.41 0l-1.83 1.83 3.75 3.75 1.83-1.83z"/></svg>
<svg style="position:absolute;left:19.7px;top:92.36px;width:12px;height:12px" viewBox="0 0 24 24" ><path fill="#8f8f8f" d="M18.92 6.01C18.72 5.42 18.16 5 17.5 5h-11c-.66 0-1.21.42-1.42 1.01L3 12v8c0 .55.45 1 1 1h1c.55 0 1-.45 1-1v-1h12v1c0 .55.45 1 1 1h1c.55 0 1-.45 1-1v-8l-2.08-5.99zM6.5 16c-.83 0-1.5-.67-1.5-1.5S5.670 13 6.5 13s1.5.67 1.5 1.5S7.33 16 6.5 16zm11 0c-.83 0-1.5-.67-1.5-1.5s.67-1.5 1.5-1.5 1.5.67 1.5 1.5-.67 1.5-1.5 1.5zM5 11l1.5-4.5h11L19 11H5z"/></svg>
<svg style="position:absolute;left:35.0px;top:95.26px;width:9px;height:7px;overflow:visible" viewBox="0 0 9 7"><g fill="#8f8f8f"><rect x="0" y="0" width="9" height="0.95"/><rect x="0" y="1.95" width="9" height="0.95"/><rect x="0" y="3.9" width="9" height="0.95"/><rect x="0" y="5.85" width="9" height="0.95"/></g></svg>
<div style="position:absolute;left:71.6px;top:95.91px;font-size:8.8px;line-height:8.8px;color:#585858;font-weight:400;letter-spacing:0px;white-space:nowrap;">5740<span style="margin-left:-0.55px;letter-spacing:-0.55px">1</span></div>
<div style="position:absolute;left:154.60000000000002px;top:95.91px;font-size:8.8px;line-height:8.8px;color:#585858;font-weight:400;letter-spacing:-0.23px;white-space:nowrap;">FMB<span style="margin-left:-0.55px;letter-spacing:-0.55px">1</span>40 (2762<span style="margin-left:-0.55px;letter-spacing:-0.55px">1</span>3)</div>
<div style="position:absolute;left:245.2px;top:95.91px;font-size:8.8px;line-height:8.8px;color:#585858;font-weight:400;letter-spacing:0px;white-space:nowrap;">96494056<span style="margin-left:-0.55px;letter-spacing:-0.55px">1</span>837</div>
<div style="position:absolute;left:341px;top:95.91px;font-size:8.8px;line-height:8.8px;color:#585858;font-weight:400;letter-spacing:-0.23px;white-space:nowrap;">FMB<span style="margin-left:-0.55px;letter-spacing:-0.55px">1</span>40 (2762<span style="margin-left:-0.55px;letter-spacing:-0.55px">1</span>3)</div>
<div style="position:absolute;left:432px;top:95.91px;font-size:8.8px;line-height:8.8px;color:#585858;font-weight:400;letter-spacing:0px;white-space:nowrap;">35259257236700<span style="margin-left:-0.55px;letter-spacing:-0.55px">1</span></div>
<div style="position:absolute;left:532px;top:95.91px;font-size:8.8px;line-height:8.8px;color:#585858;font-weight:400;letter-spacing:0px;white-space:nowrap;">NNR-983</div>
<div style="position:absolute;left:663.7px;top:95.91px;font-size:8.8px;line-height:8.8px;color:#585858;font-weight:400;letter-spacing:-0.23px;white-space:nowrap;">Mobile LBS</div>
<div style="position:absolute;left:0;top:132.55px;width:707px;height:1px;background:#ebebeb"></div>
<svg style="position:absolute;left:6.4px;top:115.35000000000001px;width:11.2px;height:11.2px" viewBox="0 0 24 24" ><path fill="#8f8f8f" d="M3 17.25V21h3.75L17.81 9.94l-3.75-3.75L3 17.25zM20.71 7.04c.39-.39.39-1.02 0-1.41l-2.34-2.34c-.39-.39-1.02-.39-1.41 0l-1.83 1.83 3.75 3.75 1.83-1.83z"/></svg>
<svg style="position:absolute;left:21.0px;top:115.7px;width:9.7px;height:9.9px;overflow:visible" viewBox="0 0 9.7 9.9"><g fill="#8f8f8f"><rect x="0.00" y="0.00" width="1.1" height="1.12"/><rect x="1.08" y="0.00" width="1.1" height="1.12"/><rect x="2.16" y="0.00" width="1.1" height="1.12"/><rect x="3.24" y="0.00" width="1.1" height="1.12"/><rect x="5.40" y="0.00" width="1.1" height="1.12"/><rect x="6.48" y="0.00" width="1.1" height="1.12"/><rect x="7.56" y="0.00" width="1.1" height="1.12"/><rect x="8.64" y="0.00" width="1.1" height="1.12"/><rect x="0.00" y="1.10" width="1.1" height="1.12"/><rect x="2.16" y="1.10" width="1.1" height="1.12"/><rect x="3.24" y="1.10" width="1.1" height="1.12"/><rect x="5.40" y="1.10" width="1.1" height="1.12"/><rect x="6.48" y="1.10" width="1.1" height="1.12"/><rect x="8.64" y="1.10" width="1.1" height="1.12"/><rect x="0.00" y="2.20" width="1.1" height="1.12"/><rect x="1.08" y="2.20" width="1.1" height="1.12"/><rect x="2.16" y="2.20" width="1.1" height="1.12"/><rect x="4.32" y="2.20" width="1.1" height="1.12"/><rect x="5.40" y="2.20" width="1.1" height="1.12"/><rect x="6.48" y="2.20" width="1.1" height="1.12"/><rect x="7.56" y="2.20" width="1.1" height="1.12"/><rect x="8.64" y="2.20" width="1.1" height="1.12"/><rect x="2.16" y="3.30" width="1.1" height="1.12"/><rect x="3.24" y="3.30" width="1.1" height="1.12"/><rect x="4.32" y="3.30" width="1.1" height="1.12"/><rect x="6.48" y="3.30" width="1.1" height="1.12"/><rect x="0.00" y="4.40" width="1.1" height="1.12"/><rect x="1.08" y="4.40" width="1.1" height="1.12"/><rect x="3.24" y="4.40" width="1.1" height="1.12"/><rect x="5.40" y="4.40" width="1.1" height="1.12"/><rect x="7.56" y="4.40" width="1.1" height="1.12"/><rect x="8.64" y="4.40" width="1.1" height="1.12"/><rect x="1.08" y="5.50" width="1.1" height="1.12"/><rect x="2.16" y="5.50" width="1.1" height="1.12"/><rect x="4.32" y="5.50" width="1.1" height="1.12"/><rect x="5.40" y="5.50" width="1.1" height="1.12"/><rect x="6.48" y="5.50" width="1.1" height="1.12"/><rect x="7.56" y="5.50" width="1.1" height="1.12"/><rect x="0.00" y="6.60" width="1.1" height="1.12"/><rect x="1.08" y="6.60" width="1.1" height="1.12"/><rect x="2.16" y="6.60" width="1.1" height="1.12"/><rect x="4.32" y="6.60" width="1.1" height="1.12"/><rect x="6.48" y="6.60" width="1.1" height="1.12"/><rect x="8.64" y="6.60" width="1.1" height="1.12"/><rect x="0.00" y="7.70" width="1.1" height="1.12"/><rect x="2.16" y="7.70" width="1.1" height="1.12"/><rect x="3.24" y="7.70" width="1.1" height="1.12"/><rect x="5.40" y="7.70" width="1.1" height="1.12"/><rect x="6.48" y="7.70" width="1.1" height="1.12"/><rect x="7.56" y="7.70" width="1.1" height="1.12"/><rect x="0.00" y="8.80" width="1.1" height="1.12"/><rect x="1.08" y="8.80" width="1.1" height="1.12"/><rect x="2.16" y="8.80" width="1.1" height="1.12"/><rect x="4.32" y="8.80" width="1.1" height="1.12"/><rect x="5.40" y="8.80" width="1.1" height="1.12"/><rect x="7.56" y="8.80" width="1.1" height="1.12"/><rect x="8.64" y="8.80" width="1.1" height="1.12"/></g></svg>
<svg style="position:absolute;left:36.1px;top:116.25000000000001px;width:6.7px;height:8.6px;overflow:visible" viewBox="0 0 6.7 8.6"><rect x="0" y="0.4" width="6.7" height="1.2" rx="0.3" fill="#8f8f8f"/><rect x="2.1" y="0" width="2.5" height="0.8" fill="#8f8f8f"/><path d="M0.65 2.1 H6.0 V8.6 H0.65 Z" fill="#8f8f8f"/><path d="M2.2 4.0 L4.45 6.5 M4.45 4.0 L2.2 6.5" stroke="#fff" stroke-width="0.75"/></svg>
<svg style="position:absolute;left:47.1px;top:114.55px;width:12px;height:12px" viewBox="0 0 24 24" ><path fill="#8f8f8f" d="M18.92 6.01C18.72 5.42 18.16 5 17.5 5h-11c-.66 0-1.21.42-1.42 1.01L3 12v8c0 .55.45 1 1 1h1c.55 0 1-.45 1-1v-1h12v1c0 .55.45 1 1 1h1c.55 0 1-.45 1-1v-8l-2.08-5.99zM6.5 16c-.83 0-1.5-.67-1.5-1.5S5.670 13 6.5 13s1.5.67 1.5 1.5S7.33 16 6.5 16zm11 0c-.83 0-1.5-.67-1.5-1.5s.67-1.5 1.5-1.5 1.5.67 1.5 1.5-.67 1.5-1.5 1.5zM5 11l1.5-4.5h11L19 11H5z"/></svg>
<div style="position:absolute;left:71.6px;top:118.10px;font-size:8.8px;line-height:8.8px;color:#585858;font-weight:400;letter-spacing:0px;white-space:nowrap;">57384</div>
<div style="position:absolute;left:154.60000000000002px;top:118.10px;font-size:8.8px;line-height:8.8px;color:#585858;font-weight:400;letter-spacing:0.15px;white-space:nowrap;">Mozgatás teszt</div>
<div style="position:absolute;left:341px;top:118.10px;font-size:8.8px;line-height:8.8px;color:#585858;font-weight:400;letter-spacing:0.15px;white-space:nowrap;">Mozgatás teszt</div>
<div style="position:absolute;left:432px;top:118.10px;font-size:8.8px;line-height:8.8px;color:#585858;font-weight:400;letter-spacing:-0.66px;white-space:nowrap;">TESTDISPLAY9756</div>
<div style="position:absolute;left:532px;top:118.10px;font-size:8.8px;line-height:8.8px;color:#585858;font-weight:400;letter-spacing:-0.2px;white-space:nowrap;">MOZ-00<span style="margin-left:-0.55px;letter-spacing:-0.55px">1</span></div>
<div style="position:absolute;left:663.7px;top:118.10px;font-size:8.8px;line-height:8.8px;color:#585858;font-weight:400;letter-spacing:-0.23px;white-space:nowrap;">Mobile LBS</div>
<div style="position:absolute;left:0;top:154.74px;width:707px;height:1px;background:#ebebeb"></div>
<svg style="position:absolute;left:6.4px;top:137.54000000000002px;width:11.2px;height:11.2px" viewBox="0 0 24 24" ><path fill="#8f8f8f" d="M3 17.25V21h3.75L17.81 9.94l-3.75-3.75L3 17.25zM20.71 7.04c.39-.39.39-1.02 0-1.41l-2.34-2.34c-.39-.39-1.02-.39-1.41 0l-1.83 1.83 3.75 3.75 1.83-1.83z"/></svg>
<svg style="position:absolute;left:19.7px;top:136.74px;width:12px;height:12px" viewBox="0 0 24 24" ><path fill="#8f8f8f" d="M18.92 6.01C18.72 5.42 18.16 5 17.5 5h-11c-.66 0-1.21.42-1.42 1.01L3 12v8c0 .55.45 1 1 1h1c.55 0 1-.45 1-1v-1h12v1c0 .55.45 1 1 1h1c.55 0 1-.45 1-1v-8l-2.08-5.99zM6.5 16c-.83 0-1.5-.67-1.5-1.5S5.670 13 6.5 13s1.5.67 1.5 1.5S7.33 16 6.5 16zm11 0c-.83 0-1.5-.67-1.5-1.5s.67-1.5 1.5-1.5 1.5.67 1.5 1.5-.67 1.5-1.5 1.5zM5 11l1.5-4.5h11L19 11H5z"/></svg>
<div style="position:absolute;left:71.6px;top:140.29px;font-size:8.8px;line-height:8.8px;color:#585858;font-weight:400;letter-spacing:0px;white-space:nowrap;">57<span style="margin-left:-0.55px;letter-spacing:-0.55px">1</span>2<span style="margin-left:-0.55px;letter-spacing:-0.55px">1</span></div>
<div style="position:absolute;left:154.60000000000002px;top:140.29px;font-size:8.8px;line-height:8.8px;color:#585858;font-weight:400;letter-spacing:0.44px;white-space:nowrap;">nincsadat</div>
<div style="position:absolute;left:341px;top:140.29px;font-size:8.8px;line-height:8.8px;color:#585858;font-weight:400;letter-spacing:0.29px;white-space:nowrap;">csongoré2</div>
<div style="position:absolute;left:432px;top:140.29px;font-size:8.8px;line-height:8.8px;color:#585858;font-weight:400;letter-spacing:0px;white-space:nowrap;">3503<span style="margin-left:-0.55px;letter-spacing:-0.55px">1</span>7<span style="margin-left:-0.55px;letter-spacing:-0.55px">1</span>76986507</div>
<div style="position:absolute;left:532px;top:140.29px;font-size:8.8px;line-height:8.8px;color:#585858;font-weight:400;letter-spacing:0.23px;white-space:nowrap;">AA-DD-234</div>
<div style="position:absolute;left:663.7px;top:140.29px;font-size:8.8px;line-height:8.8px;color:#585858;font-weight:400;letter-spacing:-0.23px;white-space:nowrap;">Mobile LBS</div>
<div style="position:absolute;left:0;top:176.93px;width:707px;height:1px;background:#ebebeb"></div>
<svg style="position:absolute;left:6.4px;top:159.73000000000002px;width:11.2px;height:11.2px" viewBox="0 0 24 24" ><path fill="#8f8f8f" d="M3 17.25V21h3.75L17.81 9.94l-3.75-3.75L3 17.25zM20.71 7.04c.39-.39.39-1.02 0-1.41l-2.34-2.34c-.39-.39-1.02-.39-1.41 0l-1.83 1.83 3.75 3.75 1.83-1.83z"/></svg>
<svg style="position:absolute;left:19.7px;top:158.93px;width:12px;height:12px" viewBox="0 0 24 24" ><path fill="#8f8f8f" d="M18.92 6.01C18.72 5.42 18.16 5 17.5 5h-11c-.66 0-1.21.42-1.42 1.01L3 12v8c0 .55.45 1 1 1h1c.55 0 1-.45 1-1v-1h12v1c0 .55.45 1 1 1h1c.55 0 1-.45 1-1v-8l-2.08-5.99zM6.5 16c-.83 0-1.5-.67-1.5-1.5S5.670 13 6.5 13s1.5.67 1.5 1.5S7.33 16 6.5 16zm11 0c-.83 0-1.5-.67-1.5-1.5s.67-1.5 1.5-1.5 1.5.67 1.5 1.5-.67 1.5-1.5 1.5zM5 11l1.5-4.5h11L19 11H5z"/></svg>
<div style="position:absolute;left:71.6px;top:162.48px;font-size:8.8px;line-height:8.8px;color:#585858;font-weight:400;letter-spacing:0px;white-space:nowrap;">5202<span style="margin-left:-0.55px;letter-spacing:-0.55px">1</span></div>
<div style="position:absolute;left:154.60000000000002px;top:162.48px;font-size:8.8px;line-height:8.8px;color:#585858;font-weight:400;letter-spacing:0.08px;white-space:nowrap;">Miki Toyota Prius+</div>
<div style="position:absolute;left:341px;top:162.48px;font-size:8.8px;line-height:8.8px;color:#585858;font-weight:400;letter-spacing:0.13px;white-space:nowrap;">Toyota Prius+</div>
<div style="position:absolute;left:432px;top:162.48px;font-size:8.8px;line-height:8.8px;color:#585858;font-weight:400;letter-spacing:0px;white-space:nowrap;">352093084<span style="margin-left:-0.55px;letter-spacing:-0.55px">1</span>8<span style="margin-left:-0.55px;letter-spacing:-0.55px">1</span>428</div>
<div style="position:absolute;left:532px;top:162.48px;font-size:8.8px;line-height:8.8px;color:#585858;font-weight:400;letter-spacing:-0.6px;white-space:nowrap;">RSX047</div>
<div style="position:absolute;left:663.7px;top:162.48px;font-size:8.8px;line-height:8.8px;color:#585858;font-weight:400;letter-spacing:-0.23px;white-space:nowrap;">Mobile LBS</div>
<div style="position:absolute;left:0;top:199.12px;width:707px;height:1px;background:#ebebeb"></div>
<svg style="position:absolute;left:6.4px;top:181.92000000000002px;width:11.2px;height:11.2px" viewBox="0 0 24 24" ><path fill="#8f8f8f" d="M3 17.25V21h3.75L17.81 9.94l-3.75-3.75L3 17.25zM20.71 7.04c.39-.39.39-1.02 0-1.41l-2.34-2.34c-.39-.39-1.02-.39-1.41 0l-1.83 1.83 3.75 3.75 1.83-1.83z"/></svg>
<svg style="position:absolute;left:19.7px;top:181.12px;width:12px;height:12px" viewBox="0 0 24 24" ><path fill="#8f8f8f" d="M18.92 6.01C18.72 5.42 18.16 5 17.5 5h-11c-.66 0-1.21.42-1.42 1.01L3 12v8c0 .55.45 1 1 1h1c.55 0 1-.45 1-1v-1h12v1c0 .55.45 1 1 1h1c.55 0 1-.45 1-1v-8l-2.08-5.99zM6.5 16c-.83 0-1.5-.67-1.5-1.5S5.670 13 6.5 13s1.5.67 1.5 1.5S7.33 16 6.5 16zm11 0c-.83 0-1.5-.67-1.5-1.5s.67-1.5 1.5-1.5 1.5.67 1.5 1.5-.67 1.5-1.5 1.5zM5 11l1.5-4.5h11L19 11H5z"/></svg>
<div style="position:absolute;left:71.6px;top:184.67px;font-size:8.8px;line-height:8.8px;color:#585858;font-weight:400;letter-spacing:0px;white-space:nowrap;">4<span style="margin-left:-0.55px;letter-spacing:-0.55px">1</span><span style="margin-left:-0.55px;letter-spacing:-0.55px">1</span>53</div>
<div style="position:absolute;left:154.60000000000002px;top:184.67px;font-size:8.8px;line-height:8.8px;color:#585858;font-weight:400;letter-spacing:0px;white-space:nowrap;">Ford Focus Ruptela</div>
<div style="position:absolute;left:341px;top:184.67px;font-size:8.8px;line-height:8.8px;color:#585858;font-weight:400;letter-spacing:0px;white-space:nowrap;">Ford Focus Ruptela</div>
<div style="position:absolute;left:432px;top:184.67px;font-size:8.8px;line-height:8.8px;color:#585858;font-weight:400;letter-spacing:0px;white-space:nowrap;">866<span style="margin-left:-0.55px;letter-spacing:-0.55px">1</span>9<span style="margin-left:-0.55px;letter-spacing:-0.55px">1</span>03588959<span style="margin-left:-0.55px;letter-spacing:-0.55px">1</span></div>
<div style="position:absolute;left:532px;top:184.67px;font-size:8.8px;line-height:8.8px;color:#585858;font-weight:400;letter-spacing:-0.2px;white-space:nowrap;">FRD-987</div>
<div style="position:absolute;left:663.7px;top:184.67px;font-size:8.8px;line-height:8.8px;color:#585858;font-weight:400;letter-spacing:-0.23px;white-space:nowrap;">Mobile LBS</div>
<div style="position:absolute;left:0;top:221.31px;width:707px;height:1px;background:#ebebeb"></div>
<svg style="position:absolute;left:6.4px;top:204.11px;width:11.2px;height:11.2px" viewBox="0 0 24 24" ><path fill="#8f8f8f" d="M3 17.25V21h3.75L17.81 9.94l-3.75-3.75L3 17.25zM20.71 7.04c.39-.39.39-1.02 0-1.41l-2.34-2.34c-.39-.39-1.02-.39-1.41 0l-1.83 1.83 3.75 3.75 1.83-1.83z"/></svg>
<svg style="position:absolute;left:19.7px;top:203.31px;width:12px;height:12px" viewBox="0 0 24 24" ><path fill="#8f8f8f" d="M18.92 6.01C18.72 5.42 18.16 5 17.5 5h-11c-.66 0-1.21.42-1.42 1.01L3 12v8c0 .55.45 1 1 1h1c.55 0 1-.45 1-1v-1h12v1c0 .55.45 1 1 1h1c.55 0 1-.45 1-1v-8l-2.08-5.99zM6.5 16c-.83 0-1.5-.67-1.5-1.5S5.670 13 6.5 13s1.5.67 1.5 1.5S7.33 16 6.5 16zm11 0c-.83 0-1.5-.67-1.5-1.5s.67-1.5 1.5-1.5 1.5.67 1.5 1.5-.67 1.5-1.5 1.5zM5 11l1.5-4.5h11L19 11H5z"/></svg>
<div style="position:absolute;left:71.6px;top:206.86px;font-size:8.8px;line-height:8.8px;color:#585858;font-weight:400;letter-spacing:0px;white-space:nowrap;">2358<span style="margin-left:-0.55px;letter-spacing:-0.55px">1</span></div>
<div style="position:absolute;left:154.60000000000002px;top:206.86px;font-size:8.8px;line-height:8.8px;color:#585858;font-weight:400;letter-spacing:0px;white-space:nowrap;">Ford Fiesta</div>
<div style="position:absolute;left:341px;top:206.86px;font-size:8.8px;line-height:8.8px;color:#585858;font-weight:400;letter-spacing:0px;white-space:nowrap;">Ford Fiesta</div>
<div style="position:absolute;left:432px;top:206.86px;font-size:8.8px;line-height:8.8px;color:#585858;font-weight:400;letter-spacing:0px;white-space:nowrap;">357454073760223</div>
<div style="position:absolute;left:532px;top:206.86px;font-size:8.8px;line-height:8.8px;color:#585858;font-weight:400;letter-spacing:0px;white-space:nowrap;">MZK-324</div>
<div style="position:absolute;left:663.7px;top:206.86px;font-size:8.8px;line-height:8.8px;color:#585858;font-weight:400;letter-spacing:-0.23px;white-space:nowrap;">Mobile LBS</div>
</div>
<div style="position:absolute;left:177px;top:355.1px;width:708px;height:10.6px;background:#f7f7f7;border-top:1px solid #ececec;border-bottom:1px solid #efefef"></div>
<div style="position:absolute;left:179.4px;top:358.2px;width:443.4px;height:5.8px;border-radius:3px;background:#c1c1c1"></div>
<svg style="position:absolute;left:0px;top:0px;width:900px;height:478px;overflow:visible" viewBox="0 0 900 478"><path d="M464.6 375 V381.6" stroke="#c4c4c4" stroke-width="1.3"/><path d="M470.8 375.3 L467.6 378.3 L470.8 381.3" stroke="#c4c4c4" stroke-width="1.3" fill="none"/><path d="M483.3 375.3 L480.1 378.3 L483.3 381.3" stroke="#c4c4c4" stroke-width="1.3" fill="none"/><ellipse cx="504.2" cy="378.9" rx="5.3" ry="5.9" fill="#e2e2e2"/><path d="M536 375.3 L539.2 378.3 L536 381.3" stroke="#333" stroke-width="1.4" fill="none"/><path d="M548 375.3 L551.2 378.3 L548 381.3" stroke="#333" stroke-width="1.4" fill="none"/><path d="M554.6 375 V381.6" stroke="#333" stroke-width="1.4"/><path d="M585.3 376.6 L588 379.3 L590.7 376.6" stroke="#666" stroke-width="1.1" fill="none"/></svg>
<div style="position:absolute;left:502.2px;top:374.65px;font-size:8.8px;line-height:8.8px;color:#444;font-weight:700;letter-spacing:0px;white-space:nowrap;">1</div>
<div style="position:absolute;left:515.4px;top:374.65px;font-size:8.8px;line-height:8.8px;color:#333;font-weight:700;letter-spacing:0px;white-space:nowrap;">2</div>
<div style="position:absolute;left:570.3px;top:374.99px;font-size:8.4px;line-height:8.4px;color:#3a3a3a;font-weight:700;letter-spacing:0px;white-space:nowrap;">10</div>
</body></html>
